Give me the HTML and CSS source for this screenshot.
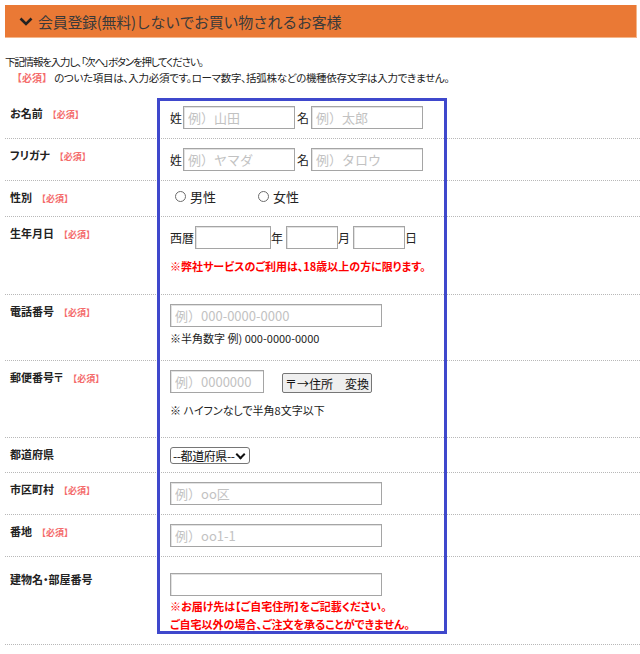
FILE: index.html
```html
<!DOCTYPE html>
<html lang="ja">
<head>
<meta charset="UTF-8">
<meta name="viewport" content="width=device-width, initial-scale=1.0">
<title>お客様情報入力</title>
<link rel="stylesheet" href="styles.css">
</head>
<body>
<div class="page">
    <h2 class="sec-head">
        <svg class="chev" width="14" height="9" viewBox="0 0 14 9"><path d="M1.5 1.5 L7 7 L12.5 1.5" fill="none" stroke="#222" stroke-width="2.6"/></svg>
        会員登録(無料)しないでお買い物されるお客様
    </h2>
    <p class="lead lead-1">下記情報を入力し、「次へ」ボタンを押してください。</p>
    <p class="lead lead-2"><span class="req">【必須】</span> のついた項目は、入力必須です。ローマ数字、括弧株などの機種依存文字は入力できません。</p>

    <div class="form">
        <div class="row">
            <div class="label">お名前<span class="req">【必須】</span></div>
            <div class="field inline">
                <span class="unit">姓</span><input type="text" class="in-name" placeholder="例）山田">
                <span class="unit gap">名</span><input type="text" class="in-name" placeholder="例）太郎">
            </div>
        </div>
        <div class="row">
            <div class="label">フリガナ<span class="req">【必須】</span></div>
            <div class="field inline">
                <span class="unit">姓</span><input type="text" class="in-name" placeholder="例）ヤマダ">
                <span class="unit gap">名</span><input type="text" class="in-name" placeholder="例）タロウ">
            </div>
        </div>
        <div class="row row-radio">
            <div class="label">性別<span class="req">【必須】</span></div>
            <div class="field inline">
                <label class="radio"><input type="radio" name="sex">男性</label>
                <label class="radio radio-2"><input type="radio" name="sex">女性</label>
            </div>
        </div>
        <div class="row row-birth">
            <div class="label">生年月日<span class="req">【必須】</span></div>
            <div class="field">
                <div class="inline">
                    <span class="unit">西暦</span><input type="text" class="in-year">
                    <span class="unit">年</span><input type="text" class="in-md">
                    <span class="unit">月</span><input type="text" class="in-md">
                    <span class="unit">日</span>
                </div>
                <p class="warn">※弊社サービスのご利用は、18歳以上の方に限ります。</p>
            </div>
        </div>
        <div class="row row-tel">
            <div class="label">電話番号<span class="req">【必須】</span></div>
            <div class="field">
                <input type="text" class="in-wide" placeholder="例）000-0000-0000">
                <p class="note note-tel">※半角数字 例) 000-0000-0000</p>
            </div>
        </div>
        <div class="row row-zip">
            <div class="label">郵便番号〒<span class="req">【必須】</span></div>
            <div class="field">
                <div class="inline bottom">
                    <input type="text" class="in-zip" placeholder="例）0000000">
                    <button type="button" class="btn-zip">〒→住所　変換</button>
                </div>
                <p class="note note-zip">※ ハイフンなしで半角8文字以下</p>
            </div>
        </div>
        <div class="row row-pref">
            <div class="label">都道府県</div>
            <div class="field">
                <span class="sel-wrap">
                    <select class="sel-pref">
                        <option>--都道府県--</option>
                    </select>
                </span>
            </div>
        </div>
        <div class="row">
            <div class="label">市区町村<span class="req">【必須】</span></div>
            <div class="field">
                <input type="text" class="in-wide" placeholder="例）oo区">
            </div>
        </div>
        <div class="row">
            <div class="label">番地<span class="req">【必須】</span></div>
            <div class="field">
                <input type="text" class="in-wide" placeholder="例）oo1-1">
            </div>
        </div>
        <div class="row row-bldg">
            <div class="label">建物名・部屋番号</div>
            <div class="field">
                <input type="text" class="in-wide">
                <p class="warn warn-bldg">※お届け先は【ご自宅住所】をご記載ください。<br>ご自宅以外の場合、ご注文を承ることができません。</p>
            </div>
        </div>

        <div class="highlight"></div>
    </div>
</div>
</body>
</html>
```

FILE: styles.css
```css
* {
    margin: 0;
    padding: 0;
    box-sizing: border-box;
}
body {
    background: #ffffff;
    color: #333333;
    font-family: "Noto Sans CJK JP", "Noto Sans", sans-serif;
    font-feature-settings: "palt";
    overflow: hidden;
}
.page {
    width: 640px;
    padding: 5px 0 0 5px;
}
.sec-head {
    display: flex;
    align-items: center;
    gap: 5px;
    width: 632px;
    height: 33px;
    padding-left: 14px;
    background-color: #ea7935;
    border-right: 1px solid #f4b68b;
    border-bottom: 1px solid #f4b68b;
    color: #3a3a3a;
    font-size: 15px;
    font-weight: normal;
    letter-spacing: -0.3px;
    font-feature-settings: normal;
}
.chev {
    flex: none;
}
.lead {
    font-size: 10.5px;
    line-height: 16px;
    color: #222;
}
.lead-1 {
    margin-top: 16px;
    letter-spacing: -1.2px;
}
.lead-2 {
    padding-left: 7px;
    letter-spacing: -0.3px;
}
.req {
    color: #f46b6b;
    font-size: 9px;
    font-weight: bold;
    margin-left: 5px;
    letter-spacing: 0;
    font-feature-settings: normal;
}
.lead .req {
    margin-left: 0;
    font-size: 10px;
}

/* form */
.form {
    position: relative;
    margin-top: 11px;
}
.row {
    display: grid;
    grid-template-columns: 155px 1fr;
    border-bottom: 1px dotted #b8b8b8;
}
.label {
    padding: 9px 0 0 5px;
    font-size: 11px;
    line-height: 14px;
    font-weight: bold;
    color: #222;
}
.field {
    padding: 9px 0 9px 10px;
    font-size: 12px;
    color: #222;
}
.inline {
    display: flex;
    align-items: center;
}
.inline.bottom {
    align-items: flex-end;
}
.unit {
    line-height: 23px;
    margin-right: 1px;
}
.unit.gap {
    margin-left: 2px;
    margin-right: 2px;
}
input[type="text"] {
    height: 23px;
    border: 1px solid #a5a5a5;
    box-shadow: inset 1px 1px 0 #e2e2e2;
    padding: 0 4px;
    font-family: inherit;
    font-size: 13px;
    color: #333;
    background: #fff;
}
input::placeholder {
    color: #c2c2c2;
}
.in-name {
    width: 112px;
}
.in-year {
    width: 76px;
}
.in-md {
    width: 52px;
    margin-left: 2px;
}
.in-wide {
    display: block;
    width: 212px;
}
.in-zip {
    width: 94px;
}
.btn-zip {
    margin-left: 18px;
    width: 90px;
    height: 20px;
    border: 1px solid #767676;
    border-radius: 2px;
    background: #efefef;
    font-family: inherit;
    font-size: 12px;
    color: #111;
}

.row-radio .field {
    padding-top: 6px;
    padding-bottom: 11px;
}
.radio {
    display: flex;
    align-items: center;
    height: 18px;
    font-size: 13px;
}
.radio input {
    appearance: none;
    width: 11px;
    height: 11px;
    margin: 0 4px 0 5px;
    border: 1px solid #6c6c6c;
    border-radius: 50%;
    background: #fff;
}
.radio-2 {
    margin-left: 37px;
}

.warn {
    color: #ff0000;
    font-size: 11px;
    font-weight: bold;
    line-height: 16px;
    margin-top: 9px;
}
.row-birth .field {
    padding-bottom: 20px;
}
.note {
    font-size: 11px;
    line-height: 15px;
    color: #222;
}
.note-tel {
    margin-top: 4px;
}
.row-tel .field {
    padding-bottom: 14px;
}
.note-zip {
    margin-top: 10px;
}
.row-zip .field {
    padding-bottom: 19px;
}
.sel-wrap {
    position: relative;
    display: block;
    width: 80px;
}
.sel-wrap::after {
    content: "";
    position: absolute;
    right: 6px;
    top: 4px;
    width: 5px;
    height: 5px;
    border-right: 2px solid #111;
    border-bottom: 2px solid #111;
    transform: rotate(45deg);
    pointer-events: none;
}
.sel-pref {
    appearance: none;
    display: block;
    width: 80px;
    height: 17px;
    padding: 0 0 0 2px;
    border: 1px solid #767676;
    border-radius: 3px;
    font-family: inherit;
    font-size: 12px;
    line-height: 15px;
    letter-spacing: -0.4px;
    color: #111;
    background: #fff;
}
.row-pref .field {
    padding-bottom: 8px;
}
.row-bldg .label {
    padding-top: 15px;
}
.row-bldg .field {
    padding-top: 16px;
    padding-bottom: 11px;
}
.warn-bldg {
    margin-top: 1px;
    line-height: 18px;
}

/* 注目枠 */
.highlight {
    position: absolute;
    left: 152px;
    top: 1px;
    width: 290px;
    height: 536px;
    border: 3px solid #3f48cc;
    pointer-events: none;
}
```
